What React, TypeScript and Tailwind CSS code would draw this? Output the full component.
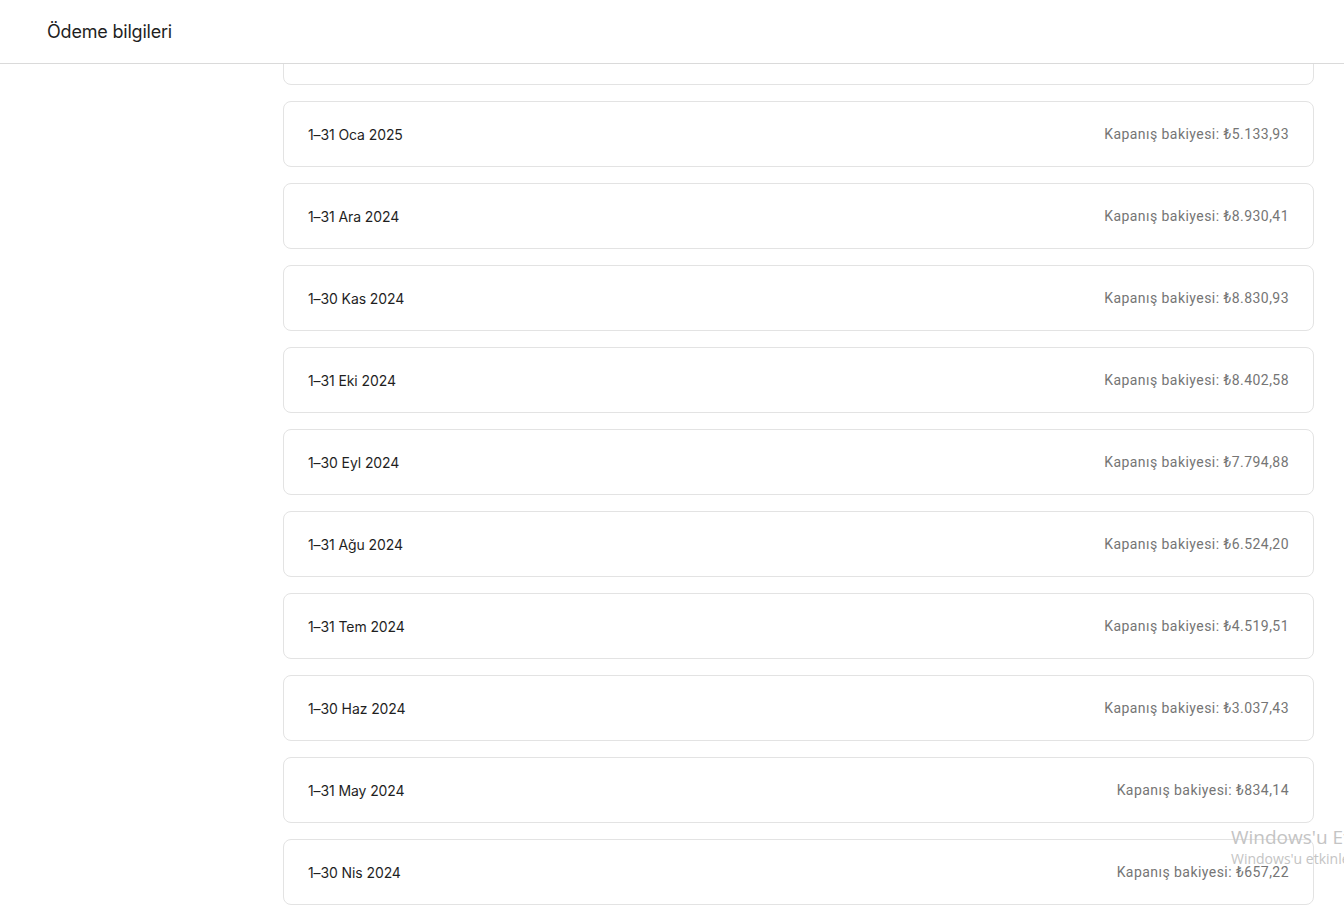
import React from "react";

interface Statement {
  period: string;
  balance: string;
}

const statements: Statement[] = [
  { period: "1–28 Şub 2025", balance: "₺5.420,17" },
  { period: "1–31 Oca 2025", balance: "₺5.133,93" },
  { period: "1–31 Ara 2024", balance: "₺8.930,41" },
  { period: "1–30 Kas 2024", balance: "₺8.830,93" },
  { period: "1–31 Eki 2024", balance: "₺8.402,58" },
  { period: "1–30 Eyl 2024", balance: "₺7.794,88" },
  { period: "1–31 Ağu 2024", balance: "₺6.524,20" },
  { period: "1–31 Tem 2024", balance: "₺4.519,51" },
  { period: "1–30 Haz 2024", balance: "₺3.037,43" },
  { period: "1–31 May 2024", balance: "₺834,14" },
  { period: "1–30 Nis 2024", balance: "₺657,22" },
  { period: "1–31 Mar 2024", balance: "₺412,06" },
];

const StatementRow: React.FC<Statement> = ({ period, balance }) => (
  <div className="flex h-[66px] shrink-0 items-center justify-between rounded-lg border border-[#e3e3e3] bg-white px-6">
    <span className="text-[14px] text-[#1f1f1f] tracking-[-0.1px] font-['Inter','Open_Sans',sans-serif]">
      {period}
    </span>
    <span className="text-[14px] text-[#757575] tracking-[0.45px] font-['Roboto','Liberation_Sans',sans-serif]">
      Kapanış bakiyesi: {balance}
    </span>
  </div>
);

export default function App() {
  return (
    <div className="relative h-[919px] w-full overflow-hidden bg-white">
      <header className="flex h-[64px] items-center border-b border-[#dadada] bg-white pl-[47px]">
        <h1 className="text-[18px] text-[#1f1f1f] tracking-[-0.2px] font-['Inter','Open_Sans',sans-serif]">
          Ödeme bilgileri
        </h1>
      </header>
      <div className="flex">
        <aside className="w-[259px] shrink-0" />
        <main className="flex-1 overflow-hidden pl-6 pr-[30px]">
          <div className="-mt-[45px] flex flex-col gap-4">
            {statements.map((s) => (
              <StatementRow key={s.period} {...s} />
            ))}
          </div>
        </main>
      </div>
      <div className="pointer-events-none absolute left-[1231px] top-[824px] whitespace-nowrap font-['Open_Sans','Noto_Sans',sans-serif] text-[#c4c4c4]">
        <div className="text-[19px] leading-[26px]">Windows'u Etkinleştir</div>
        <div className="text-[14px] leading-[18px]">Windows'u etkinleştirmek için Ayarlar'a gidin.</div>
      </div>
    </div>
  );
}
